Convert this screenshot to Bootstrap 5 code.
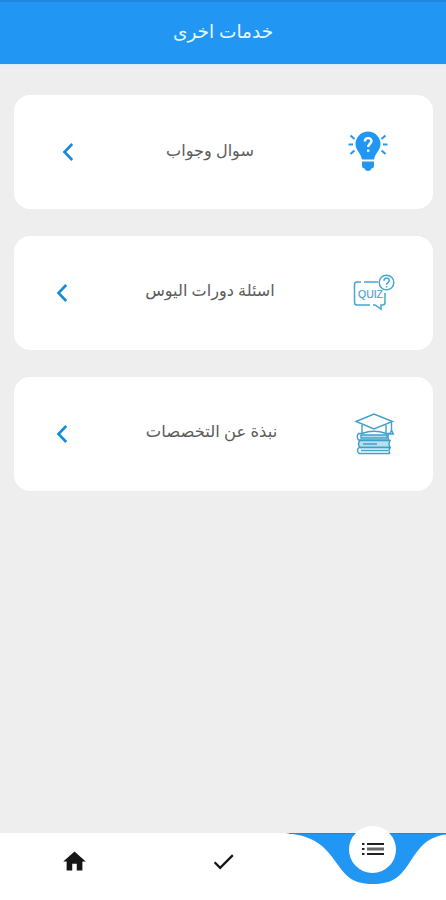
<!DOCTYPE html>
<html lang="ar" dir="rtl">
<head>
<meta charset="utf-8">
<meta name="viewport" content="width=device-width, initial-scale=1">
<title>خدمات اخرى</title>
<link href="https://cdn.jsdelivr.net/npm/bootstrap@5.3.0/dist/css/bootstrap.min.css" rel="stylesheet">
<style>
body{background:#eee;font-family:"Noto Sans","DejaVu Sans",sans-serif}
.app-bar{height:64px;background:#2196f3;border-top:2px solid #1f88dc;box-shadow:0 1px 1px #d8edfc;color:#e9f7ff;padding-bottom:5px}
.app-title{font-size:18.5px;line-height:28px}
.services{padding:31.4px 13px 0 14px;gap:27.2px}
.service{height:113.6px;border-radius:16px;padding:0 34px 0 36px;color:#5c5c5c}
.service-first{padding:0 40px 0 42px}
.service-icon{width:50px;height:50px}
.service-label{font-size:16.1px;line-height:24px;padding:0 3px 5px 0}
.service-label-wide{font-size:16.4px;padding-right:0}
.bottom-bar{height:67px}
.bar-notch{right:0;top:0}
.bar-item{width:149px;height:57px}
.bar-active{width:47px;height:47px;top:-7px;right:50px;padding-bottom:2px}
svg{display:block}
</style>
</head>
<body>
<div class="d-flex flex-column vh-100 overflow-hidden">
<header class="app-bar d-flex align-items-center justify-content-center flex-shrink-0"><h1 class="app-title fw-normal m-0">خدمات اخرى</h1></header>
<main class="services d-flex flex-column flex-grow-1" dir="ltr">
<a class="service service-first bg-white d-flex align-items-center text-decoration-none" href="#">
<svg width="24" height="24" viewBox="0 0 24 24" fill="none" stroke="#168bdc" stroke-width="2.6"><path d="M16.2 4 8.5 12l7.700 8"/></svg>
<span class="service-label flex-grow-1 text-center" dir="rtl">سوال وجواب</span>
<svg class="service-icon" viewBox="0 0 50 50"><path fill="#2196f3" d="M25 4.500a12.500 12.500 0 0 1 12.500 12.500c0 6.500-5.500 9-6.500 15.500H19c-1-6.500-6.500-9-6.500-15.500A12.500 12.500 0 0 1 25 4.500M19 34.500h12v4.500q0 2-2.500 2.500-1 2.500-3.500 2.500t-3.500-2.500Q19 41 19 39z"/><path d="M21.800 14.500c.2-4.500 6.700-4.300 6.700-.4 0 2.700-3.300 2.700-3.300 5.800M25.200 22.500v2.300" fill="none" stroke="#fff" stroke-width="2.400"/><path d="M5.500 17.500H10M40 17.500h4.500M7.500 8.500l4 3.500M42.500 8.500l-4 3.500M7.500 27l4-3.500M42.500 27l-4-3.500" stroke="#2b9bed" stroke-width="2.200"/></svg>
</a>
<a class="service bg-white d-flex align-items-center text-decoration-none" href="#">
<svg width="24" height="24" viewBox="0 0 24 24" fill="none" stroke="#168bdc" stroke-width="2.600"><path d="M16.200 4 8.500 12l7.700 8"/></svg>
<span class="service-label flex-grow-1 text-center" dir="rtl">اسئلة دورات اليوس</span>
<svg class="service-icon" viewBox="0 0 50 50" fill="none" stroke="#48a6cf" stroke-width="1.500"><path d="M12 14H8q-2.500 0-2.500 2.500v18Q5.500 37 8 37h13M15 14h14M24 37h2l6 4v-4h1.500q2.500 0 2.500-2.500V25"/><circle cx="37.500" cy="14.500" r="7.300"/><path d="M35 12.800c.1-3.600 5.200-3.500 5.200-.3 0 2.100-2.600 2.200-2.600 4.300M37.600 18v1.600"/><text x="9" y="30" font-family="Liberation Sans,sans-serif" font-size="11" textLength="25" lengthAdjust="spacingAndGlyphs" fill="#48a6cf" stroke="#48a6cf" stroke-width=".2" direction="ltr">QUIZ</text></svg>
</a>
<a class="service bg-white d-flex align-items-center text-decoration-none" href="#">
<svg width="24" height="24" viewBox="0 0 24 24" fill="none" stroke="#168bdc" stroke-width="2.600"><path d="M16.200 4 8.500 12l7.700 8"/></svg>
<span class="service-label service-label-wide flex-grow-1 text-center" dir="rtl">نبذة عن التخصصات</span>
<svg class="service-icon" viewBox="0 0 50 50" fill="none" stroke="#3fa0c9" stroke-width="1.400"><path d="M7 12.500 25 5l18.500 7.500L25 20zM13 16v8.500q12-4.500 24 0V16M42.500 13v8M41 25l1.500-4 1.800 4z"/><path d="M13 24.500H9.500q-2.500 3 0 6.500H39M37 24.500h3q-2 3 0 6.500"/><path fill="#b9e0ef" d="M11 31.500h30q-2 3.500 0 7H11q-3-3.500 0-7M12 26h26v3H12z"/><path d="M10 38.500q-3 3 0 6h31M10 38.500h31q-2 3 0 6M12 41.500h27M14 35h14"/></svg>
</a>
</main>
<nav class="bottom-bar bg-white position-relative d-flex flex-shrink-0" dir="ltr">
<svg class="bar-notch position-absolute" width="166" height="52" viewBox="0 0 166 52"><path fill="#2196f3" d="M5 0H166V1.500C144 4 137 19 128 32 119 45 111 51 93 51S67 45 58 32C45 14 37 3 5 0"/><path d="M9 .5h157" stroke="#1c86da"/></svg>
<a class="bar-item d-flex align-items-center justify-content-center" href="#" aria-label="الرئيسية"><svg width="27" height="27" viewBox="0 0 24 24" fill="#151515"><path d="M10 20v-6h4v6h5v-8h3L12 3 2 12h3v8z"/></svg></a>
<a class="bar-item d-flex align-items-center justify-content-center" href="#" aria-label="تم"><svg width="27" height="27" viewBox="0 0 24 24" fill="#151515"><path d="M9 16.170 4.830 12l-1.420 1.410L9 19 21 7l-1.410-1.410z"/></svg></a>
<a class="bar-active position-absolute bg-white rounded-circle d-flex align-items-center justify-content-center" href="#" aria-label="القائمة"><svg width="22" height="14" viewBox="0 0 22 14" fill="#222"><path d="M0 1h2.500v2H0zM0 6h2.500v2H0zM0 11h2.500v2H0zM5 1h17v2H5zM5 11h17v2H5z"/><path fill="#666" d="M5 5.500h17v3H5z"/></svg></a>
</nav>
</div>
<script src="https://cdn.jsdelivr.net/npm/bootstrap@5.3.0/dist/js/bootstrap.bundle.min.js"></script>
</body>
</html>
